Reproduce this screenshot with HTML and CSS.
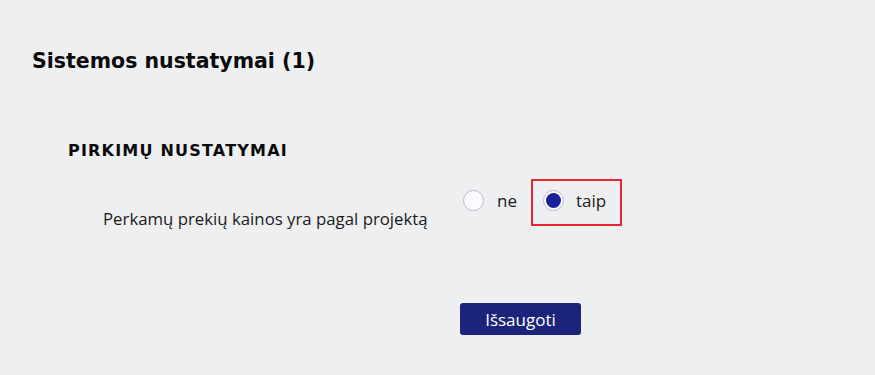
FILE: index.html
```html
<!DOCTYPE html>
<html lang="lt">
<head>
<meta charset="utf-8">
<link rel="stylesheet" href="styles.css">
</head>
<body>
<div class="page">
  <h1 class="title">Sistemos nustatymai (1)</h1>
  <section class="section">
    <h2 class="section-title">PIRKIMŲ NUSTATYMAI</h2>
    <div class="row">
      <div class="label">Perkamų prekių kainos yra pagal projektą</div>
      <div class="options">
        <label class="option"><span class="radio"></span><span class="opt-text">ne</span></label>
        <label class="option highlight"><span class="radio checked"></span><span class="opt-text">taip</span></label>
      </div>
    </div>
    <div class="actions">
      <button class="btn">Išsaugoti</button>
    </div>
  </section>
</div>
</body>
</html>
```
FILE: styles.css
```css
html, body {
  margin: 0;
  padding: 0;
  background: #eeeff1;
}
.page {
  padding: 47px 0 0 32px;
  font-family: "Open Sans", "Noto Sans", sans-serif;
  color: #111;
}
.title {
  margin: 0;
  font-family: "DejaVu Sans", sans-serif;
  font-weight: 700;
  font-size: 20.5px;
  line-height: 28px;
  color: #0b0b0b;
}
.section {
  padding: 66px 0 0 36px;
}
.section-title {
  margin: 0;
  font-family: "DejaVu Sans", sans-serif;
  font-weight: 700;
  font-size: 16px;
  letter-spacing: 1.2px;
  line-height: 20px;
  color: #0b0b0b;
}
.row {
  display: flex;
  align-items: flex-start;
  margin-top: 18px;
}
.label {
  width: 395px;
  padding: 30px 0 0 35px;
  box-sizing: border-box;
  font-size: 16.8px;
  line-height: 20px;
  color: #1a1a1a;
  white-space: nowrap;
}
.options {
  display: flex;
  align-items: center;
  gap: 14px;
}
.option {
  display: flex;
  align-items: center;
  gap: 13px;
  height: 47px;
  box-sizing: border-box;
  font-size: 17px;
  color: #1a1a1a;
}
.option.highlight {
  border: 2px solid #e8252b;
  padding: 0 14px 0 10px;
  gap: 12px;
}
.radio {
  width: 21px;
  height: 21px;
  border-radius: 50%;
  box-sizing: border-box;
  border: 1px solid #b9bdc9;
  background: #fbfbfe;
  display: flex;
  align-items: center;
  justify-content: center;
  margin-top: -4px;
}
.radio.checked::after {
  content: "";
  width: 15px;
  height: 15px;
  border-radius: 50%;
  background: #1a2198;
}
.opt-text {
  margin-top: -4px;
}
.actions {
  display: flex;
  padding: 74px 0 0 392px;
}
.btn {
  width: 121px;
  height: 32px;
  border: none;
  border-radius: 3px;
  background: #1b237a;
  color: #fff;
  font-family: "Open Sans", "Noto Sans", sans-serif;
  font-size: 17px;
  padding: 0;
}
```
